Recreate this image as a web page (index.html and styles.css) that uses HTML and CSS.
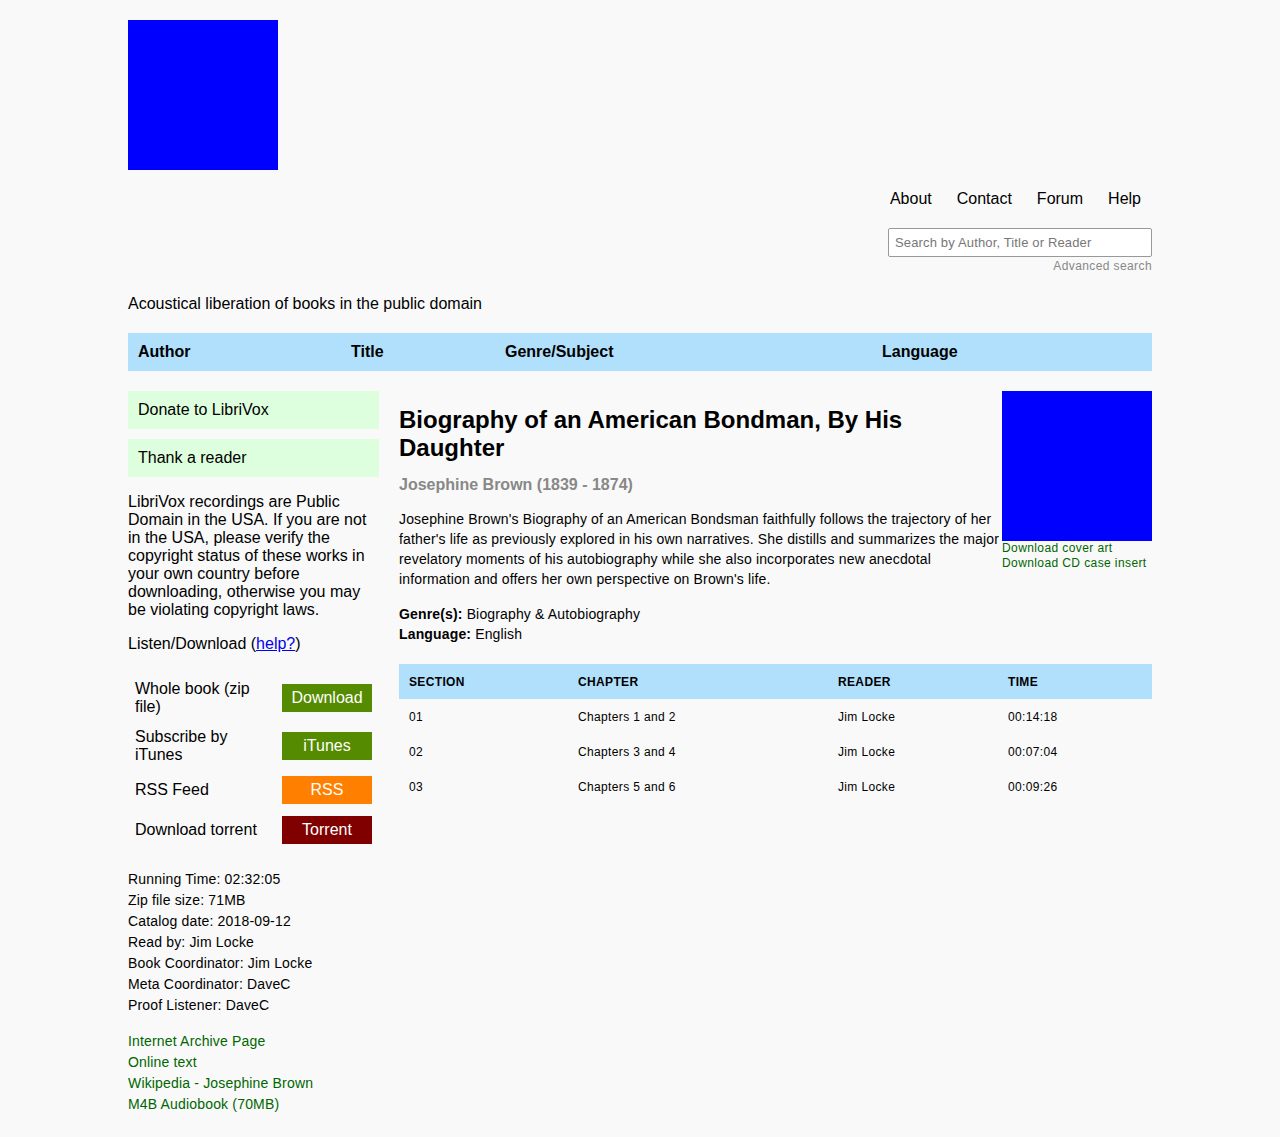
FILE: index.html
```html
<!DOCTYPE html>
<html>
<head>
<meta charset="utf-8">
<link rel="stylesheet" href="styles.css">
</head>
<body>
<div class="page">
  <header class="site-header">
    <div class="logo"></div>
    <nav class="nav">
      <a href="#">About</a>
      <a href="#">Contact</a>
      <a href="#">Forum</a>
      <a href="#">Help</a>
    </nav>
    <div class="search">
      <input type="text" placeholder="Search by Author, Title or Reader">
      <a class="adv" href="#">Advanced search</a>
    </div>
    <p class="tagline">Acoustical liberation of books in the public domain</p>
  </header>

  <div class="browse-bar">
    <div>Author</div>
    <div>Title</div>
    <div>Genre/Subject</div>
    <div>Language</div>
  </div>

  <div class="columns">
    <aside class="sidebar">
      <a class="green-box" href="#">Donate to LibriVox</a>
      <a class="green-box" href="#">Thank a reader</a>
      <p class="notice">LibriVox recordings are Public Domain in the USA. If you are not in the USA, please verify the copyright status of these works in your own country before downloading, otherwise you may be violating copyright laws.</p>
      <p class="listen">Listen/Download (<a href="#">help?</a>)</p>
      <div class="dl-grid">
        <div class="dl-label">Whole book (zip file)</div>
        <div class="dl-btn-cell"><a class="btn btn-green" href="#">Download</a></div>
        <div class="dl-label">Subscribe by iTunes</div>
        <div class="dl-btn-cell"><a class="btn btn-green" href="#">iTunes</a></div>
        <div class="dl-label">RSS Feed</div>
        <div class="dl-btn-cell"><a class="btn btn-orange" href="#">RSS</a></div>
        <div class="dl-label">Download torrent</div>
        <div class="dl-btn-cell"><a class="btn btn-red" href="#">Torrent</a></div>
      </div>
      <div class="stats">
        <div>Running Time: 02:32:05</div>
        <div>Zip file size: 71MB</div>
        <div>Catalog date: 2018-09-12</div>
        <div>Read by: Jim Locke</div>
        <div>Book Coordinator: Jim Locke</div>
        <div>Meta Coordinator: DaveC</div>
        <div>Proof Listener: DaveC</div>
      </div>
      <div class="links">
        <a href="#">Internet Archive Page</a>
        <a href="#">Online text</a>
        <a href="#">Wikipedia - Josephine Brown</a>
        <a href="#">M4B Audiobook (70MB)</a>
      </div>
    </aside>

    <main class="main">
      <div class="cover">
        <div class="cover-img"></div>
        <a href="#">Download cover art</a>
        <a href="#">Download CD case insert</a>
      </div>
      <h1 class="title">Biography of an American Bondman, By His Daughter</h1>
      <p class="author">Josephine Brown (1839 - 1874)</p>
      <p class="desc">Josephine Brown's Biography of an American Bondsman faithfully follows the trajectory of her father's life as previously explored in his own narratives. She distills and summarizes the major revelatory moments of his autobiography while she also incorporates new anecdotal information and offers her own perspective on Brown's life.</p>
      <p class="meta"><b>Genre(s):</b> Biography &amp; Autobiography<br><b>Language:</b> English</p>
      <table class="chapters">
        <thead>
          <tr><th class="c1">Section</th><th class="c2">Chapter</th><th class="c3">Reader</th><th>Time</th></tr>
        </thead>
        <tbody>
          <tr><td>01</td><td>Chapters 1 and 2</td><td>Jim Locke</td><td>00:14:18</td></tr>
          <tr><td>02</td><td>Chapters 3 and 4</td><td>Jim Locke</td><td>00:07:04</td></tr>
          <tr><td>03</td><td>Chapters 5 and 6</td><td>Jim Locke</td><td>00:09:26</td></tr>
        </tbody>
      </table>
    </main>
  </div>
</div>
</body>
</html>
```

FILE: styles.css
```css
* { box-sizing: border-box; }
html, body { margin: 0; padding: 0; }
body {
  background: #f9f9f9;
  color: #000;
  font-family: "Liberation Sans", Arial, sans-serif;
  font-size: 16px;
}
a { text-decoration: none; color: inherit; }
p { margin: 0; }

.page {
  width: 1024px;
  margin: 0 auto;
  padding-top: 20px;
  padding-bottom: 22px;
}

.logo {
  width: 150px;
  height: 150px;
  background: #0000ff;
}

.nav {
  display: flex;
  justify-content: flex-end;
  margin-top: 17px;
}
.nav a {
  padding: 0 11px 0 14px;
  line-height: 24px;
  color: #000;
}
.nav a:last-child { padding-right: 11px; }

.search {
  display: flex;
  flex-direction: column;
  align-items: flex-end;
  margin-top: 17px;
}
.search input {
  width: 264px;
  height: 29px;
  border: 1px solid #999;
  border-radius: 2px;
  background: #fff;
  padding: 0 6px;
  font-family: "Liberation Sans", Arial, sans-serif;
  font-size: 13px;
  letter-spacing: 0.15px;
}
.search input::placeholder { color: #777; }
.adv {
  font-size: 12px;
  line-height: 16px;
  color: #888;
  margin-top: 1px;
  letter-spacing: 0.4px;
}

.tagline {
  margin-top: 21px;
  line-height: 18px;
}

.browse-bar {
  margin-top: 20px;
  height: 38px;
  background: #b0e0fc;
  display: grid;
  grid-template-columns: 213px 154px 377px 1fr;
  align-items: center;
  font-weight: bold;
}
.browse-bar div { padding-left: 10px; }

.columns {
  display: flex;
  gap: 20px;
  margin-top: 20px;
  align-items: flex-start;
}

.sidebar { width: 251px; flex: none; }
.green-box {
  display: block;
  height: 38px;
  line-height: 38px;
  padding-left: 10px;
  background: #ddffdd;
  margin-bottom: 10px;
}
.notice {
  margin-top: 16px;
  line-height: 18px;
}
.listen {
  margin-top: 16px;
  line-height: 18px;
}
.listen a { color: #0000ee; text-decoration: underline; }

.dl-grid {
  margin-top: 21px;
  display: grid;
  grid-template-columns: 147px 104px;
  align-items: center;
}
.dl-label {
  padding: 6px 7px;
  line-height: 18px;
}
.dl-btn-cell { padding: 6px 7px; }
.btn {
  display: block;
  width: 90px;
  height: 28px;
  line-height: 28px;
  text-align: center;
  color: #fff;
}
.btn-green { background: #558b00; }
.btn-orange { background: #ff8000; }
.btn-red { background: #800000; }

.stats {
  margin-top: 19px;
  font-size: 14px;
  line-height: 21px;
  letter-spacing: 0.17px;
}
.links {
  margin-top: 15px;
  font-size: 14px;
  line-height: 21px;
  letter-spacing: 0.17px;
}
.links a { display: block; color: #006600; }

.main { flex: 1; min-width: 0; }
.cover {
  float: right;
  width: 150px;
  font-size: 12px;
  line-height: 15px;
  letter-spacing: 0.4px;
  white-space: nowrap;
}
.cover-img { width: 150px; height: 150px; background: #0000ff; }
.cover a { display: block; color: #006600; }

.title {
  margin: 15px 0 0;
  font-size: 24px;
  line-height: 28px;
  font-weight: bold;
}
.author {
  margin-top: 13px;
  line-height: 20px;
  color: #888;
  font-weight: bold;
}
.desc {
  margin-top: 14px;
  font-size: 14px;
  line-height: 20px;
  letter-spacing: 0.15px;
}
.meta {
  margin-top: 15px;
  font-size: 14px;
  line-height: 20px;
  letter-spacing: 0.15px;
}

.chapters {
  clear: both;
  margin-top: 20px;
  width: 100%;
  border-collapse: collapse;
  font-size: 12px;
  letter-spacing: 0.35px;
}
.chapters th {
  background: #b0e0fc;
  height: 35px;
  text-align: left;
  text-transform: uppercase;
  padding: 0 10px;
  font-weight: bold;
}
.chapters td {
  height: 35px;
  padding: 0 10px;
}
.chapters .c1 { width: 169px; }
.chapters .c2 { width: 260px; }
.chapters .c3 { width: 170px; }
```
